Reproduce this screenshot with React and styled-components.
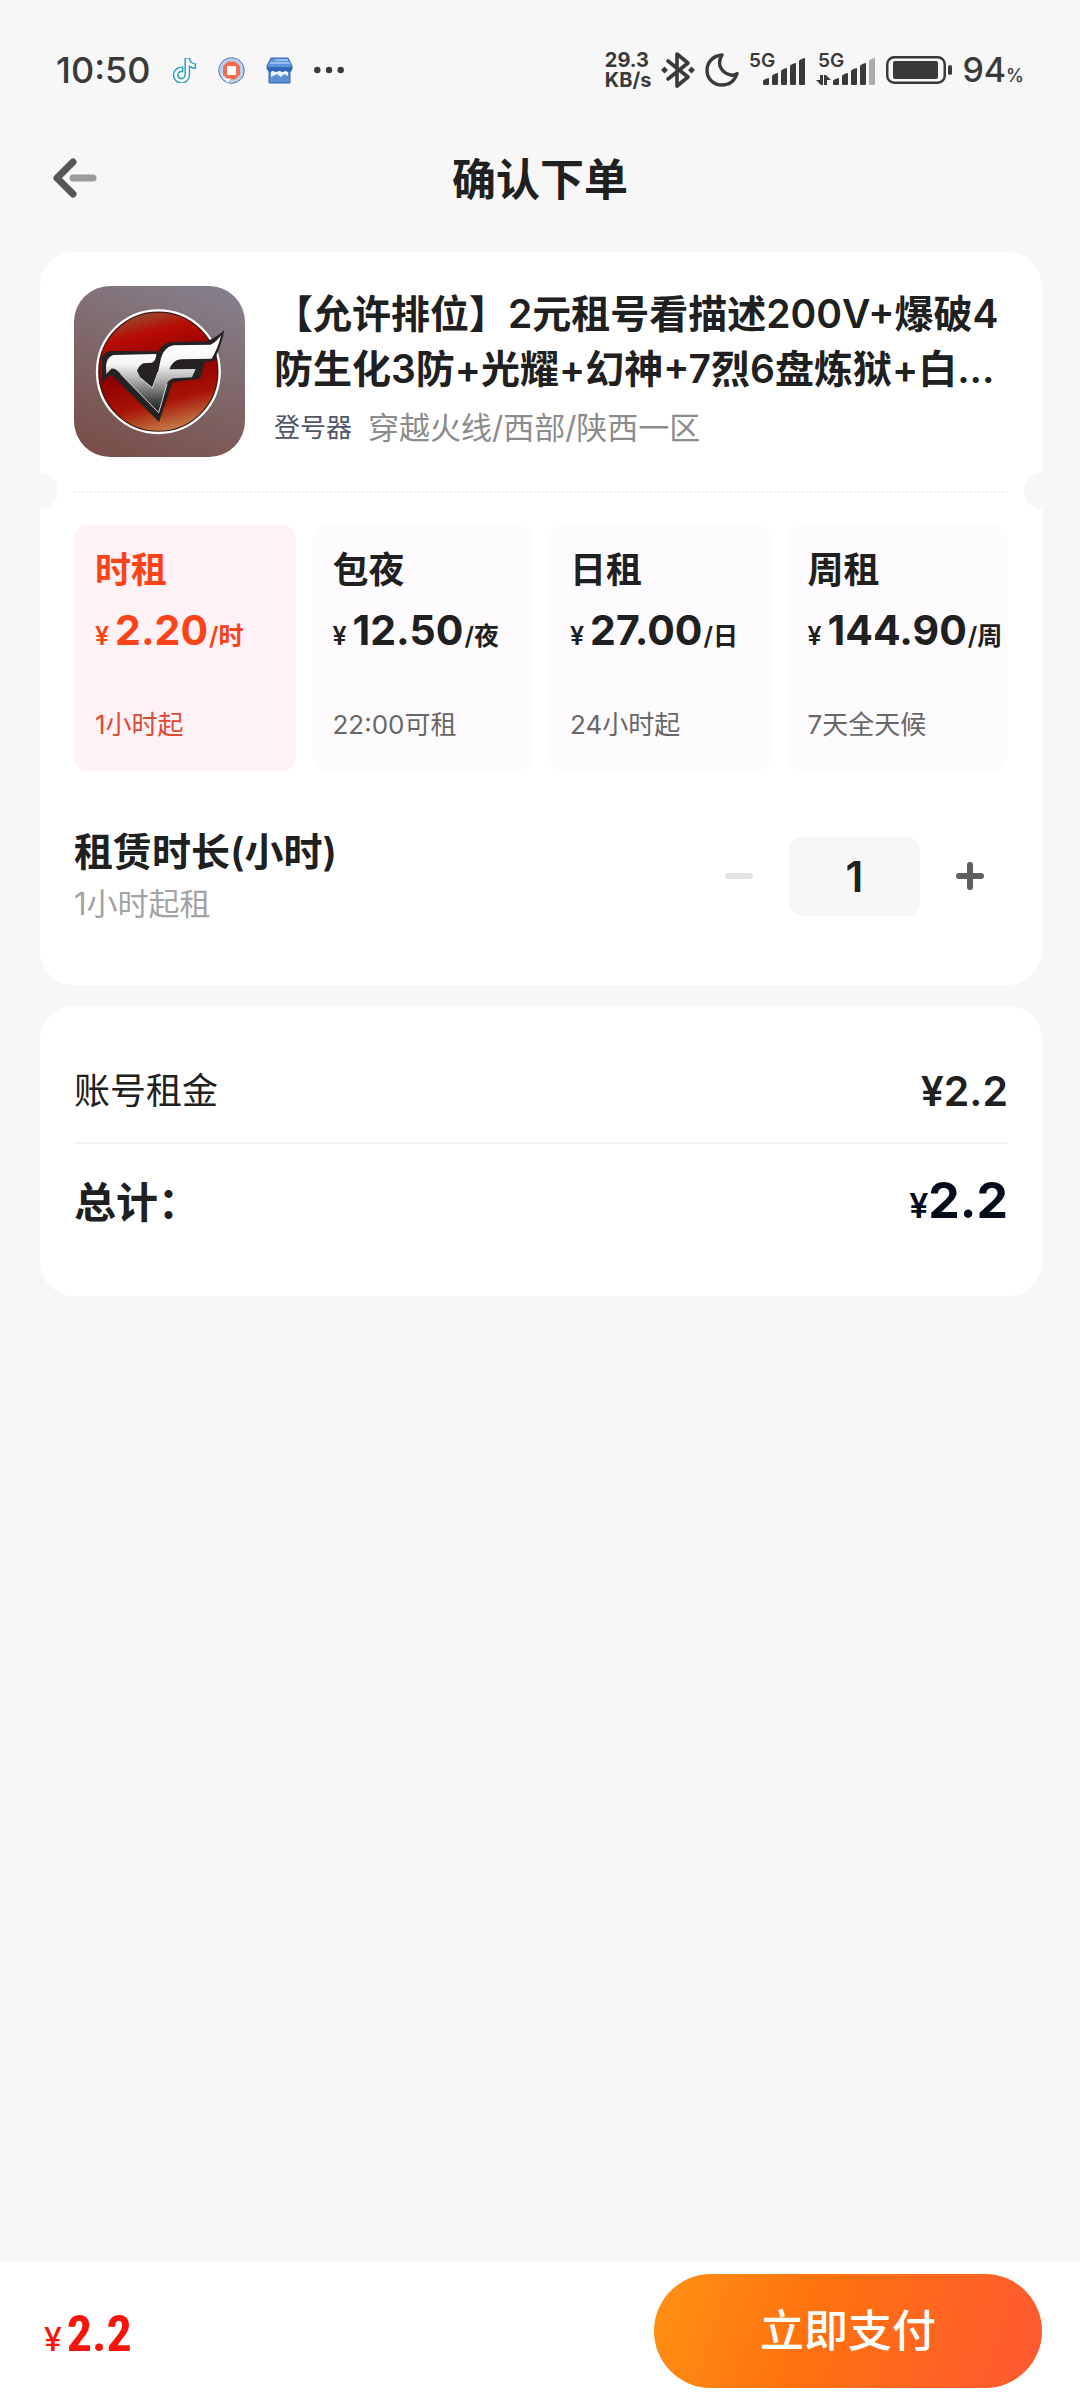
import React, { useState } from "react";
import styled, { createGlobalStyle } from "styled-components";
import { FaTiktok } from "react-icons/fa";

const GlobalStyle = createGlobalStyle`
  *, *::before, *::after { box-sizing: border-box; }
  body {
    margin: 0;
    background: #f7f7f7;
    color: #202020;
    font-family: Inter, "Noto Sans CJK SC", sans-serif;
  }
  button, input { font: inherit; color: inherit; border: 0; padding: 0; margin: 0; background: none; }
  button { cursor: pointer; }
  h1, h2, p { margin: 0; }
`;

const Page = styled.div`
  min-height: 100vh;
  display: flex;
  flex-direction: column;
`;

const StatusBar = styled.div`
  display: flex;
  justify-content: space-between;
  align-items: center;
  height: 140px;
  padding: 0 56px;
  color: #3a3a3a;
`;

const StatusGroup = styled.div`
  display: flex;
  align-items: center;
  gap: ${(p) => p.$gap}px;
`;

const Clock = styled.span`
  font-size: 36px;
  line-height: 40px;
  font-weight: 500;
`;

const NetSpeed = styled.span`
  font-size: 20px;
  line-height: 20px;
  font-weight: 700;
`;

const BatteryText = styled.span`
  font-size: 34px;
  line-height: 40px;
  font-weight: 500;
  small { font-size: 18px; line-height: 1; }
`;

const NavBar = styled.header`
  display: grid;
  grid-template-columns: 48px 1fr 48px;
  align-items: center;
  height: 80px;
  padding: 0 52px;
`;

const BackButton = styled.button`
  display: flex;
  height: 48px;
  align-items: center;
`;

const PageTitle = styled.h1`
  text-align: center;
  font-size: 44px;
  line-height: 60px;
  font-weight: 600;
`;

const Main = styled.main`
  flex: 1;
  display: flex;
  flex-direction: column;
  gap: 21px;
  padding: 32px 38px 32px 40px;
`;

const Card = styled.section`
  background: #fff;
  border-radius: 34px;
  padding: 34px;
`;

const Product = styled.div`
  display: flex;
  gap: 29px;
`;

const GameIcon = styled.svg`
  flex: none;
  width: 171px;
  height: 171px;
  border-radius: 36px;
`;

const ProductInfo = styled.div`
  flex: 1;
  min-width: 0;
`;

const ProductTitle = styled.h2`
  font-size: 39px;
  line-height: 55px;
  font-weight: 600;
`;

const Meta = styled.p`
  display: flex;
  align-items: center;
  gap: 16px;
  margin-top: 14px;
  line-height: 36px;
`;

const LoginTag = styled.span`
  font-size: 26px;
  color: #51566a;
`;

const Region = styled.span`
  font-size: 31px;
  color: #8c8c8c;
`;

const TicketLine = styled.div`
  position: relative;
  margin: 34px 0 32px;
  border-top: 2px dotted #f1f1f1;
  &::before, &::after {
    content: "";
    position: absolute;
    top: -20px;
    width: 36px;
    height: 36px;
    border-radius: 50%;
    background: #f7f7f7;
  }
  &::before { left: -52px; }
  &::after { right: -52px; }
`;

const Plans = styled.div`
  display: grid;
  grid-template-columns: repeat(4, 1fr);
  gap: 16px;
`;

const Plan = styled.button`
  display: flex;
  flex-direction: column;
  height: 246px;
  padding: 21px 0 21px 21px;
  border-radius: 14px;
  text-align: left;
  white-space: nowrap;
  background: ${(p) => (p.$active ? "#fef2f6" : "#fefbff")};
  color: ${(p) => (p.$active ? "#fa4318" : "#202020")};
`;

const PlanName = styled.span`
  font-size: 36px;
  line-height: 48px;
  font-weight: 600;
`;

const PlanPrice = styled.span`
  display: flex;
  align-items: baseline;
  margin-top: 9px;
  font-size: 25px;
  line-height: 54px;
  font-weight: 600;
  strong { font-size: 41px; font-weight: 700; margin: 0 1px 0 6px; }
`;

const PlanNote = styled.span`
  margin-top: auto;
  font-size: 26px;
  line-height: 50px;
  color: ${(p) => (p.$active ? "#dd4a35" : "#686868")};
`;

const Duration = styled.div`
  display: flex;
  justify-content: space-between;
  align-items: center;
  padding: 55px 0 25px;
`;

const DurationLabel = styled.label`
  display: block;
  font-size: 39px;
  line-height: 52px;
  font-weight: 600;
`;

const DurationHint = styled.p`
  margin-top: 4px;
  font-size: 31px;
  line-height: 44px;
  color: #a3a3a3;
`;

const Stepper = styled.div`
  display: flex;
  align-items: center;
  gap: 12px;
`;

const StepButton = styled.button`
  display: flex;
  align-items: center;
  justify-content: center;
  width: 76px;
  height: 79px;
  color: #5f5f5f;
  &:disabled { color: #e3e3e3; cursor: default; }
`;

const StepInput = styled.input`
  width: 131px;
  height: 79px;
  border-radius: 14px;
  background: #f6f6f6;
  text-align: center;
  font-size: 42px;
  font-weight: 600;
`;

const FeeRow = styled.div`
  display: flex;
  justify-content: space-between;
  align-items: center;
  height: ${(p) => (p.$total ? 118 : 104)}px;
  line-height: 60px;
  border-bottom: ${(p) => (p.$total ? "0" : "2px solid #f4f4f4")};
`;

const FeeName = styled.span`
  font-size: ${(p) => (p.$total ? 42 : 36)}px;
  font-weight: ${(p) => (p.$total ? 600 : 400)};
`;

const FeeValue = styled.span`
  font-size: 41px;
  font-weight: 600;
`;

const TotalValue = styled.span`
  color: #060c1c;
  font-size: 34px;
  font-weight: 600;
  strong { font-size: 50px; font-weight: 700; }
`;

const PayBar = styled.footer`
  display: flex;
  justify-content: space-between;
  align-items: center;
  padding: 13px 38px 12px 44px;
  background: #fff;
`;

const PayPrice = styled.span`
  display: flex;
  align-items: baseline;
  gap: 5px;
  padding-top: 12px;
  color: #f81408;
  font-size: 32px;
  font-weight: 500;
  line-height: 60px;
  strong {
    font-family: "Roboto Condensed", "Open Sans Condensed", "Liberation Sans", sans-serif;
    font-size: 50px;
    font-weight: 700;
  }
`;

const PayButton = styled.button`
  width: 388px;
  height: 114px;
  border-radius: 57px;
  background: linear-gradient(110deg, #ff9214 0%, #ff720f 40%, #ff5832 100%);
  color: #fff;
  font-size: 44px;
  line-height: 60px;
  font-weight: 500;
`;

function RecorderIcon() {
  return (
    <svg width="27" height="27" viewBox="0 0 27 27" aria-hidden="true">
      <circle cx="13.5" cy="13.5" r="12.8" fill="#b9d0f0" stroke="#5377b4" />
      <path d="M10 4.5h7l5 4.500v8.500l-5 5h-7l-5-5V9z" fill="#fa6a4c" />
      <path d="M4 19l5 3 4-1-3 5z" fill="#fff" />
      <rect x="9" y="9" width="9" height="9" rx="1" fill="#fff" />
    </svg>
  );
}

function ShopIcon() {
  return (
    <svg width="27" height="27" viewBox="0 0 27 27" aria-hidden="true">
      <path d="M5 1h17l4 8v3H1V9z" fill="#5b93dd" stroke="#2f63b0" />
      <path d="M4 6h20M9 3h13" stroke="#a9cdf5" strokeWidth="1.500" />
      <path d="M3 13h21v13H3z" fill="#5b8fd6" stroke="#2f63b0" />
      <path d="M5 14h17v5l-4-2-3 3-4-3-6 3z" fill="#e9f2fd" />
      <path d="M1 10h25v2q0 3-3 3t-3-2q-1 2-3.500 2T13.500 13q-1 2-3.500 2t-3-2q-1 2-3 2t-3-3z" fill="#2f69ba" />
    </svg>
  );
}

function DotsIcon() {
  return (
    <svg width="30" height="8" viewBox="0 0 30 8" fill="currentColor" aria-hidden="true">
      <circle cx="3.300" cy="4" r="3.200" />
      <circle cx="15" cy="4" r="3.200" />
      <circle cx="26.700" cy="4" r="3.200" />
    </svg>
  );
}

function BluetoothIcon() {
  return (
    <svg width="34" height="38" viewBox="0 0 34 38" fill="none" stroke="currentColor" strokeWidth="3.600" strokeLinejoin="round" strokeLinecap="round" aria-hidden="true">
      <path d="M7 10l20 16-11 9V3l11 9L7 28" />
      <path d="M0 19l3.500-3.500L7 19l-3.500 3.500zM27 19l3.500-3.500L34 19l-3.500 3.500z" fill="currentColor" stroke="none" />
    </svg>
  );
}

function MoonIcon() {
  return (
    <svg width="34" height="34" viewBox="0 0 34 34" fill="none" stroke="currentColor" strokeWidth="3.400" strokeLinejoin="round" aria-hidden="true">
      <path d="M17 2C7 3 2 10 2 17.500 2 26 9 32 17 32c7 0 12.500-4 15-11.500-2 1.500-4 2-6 1.500C17 20 11 12 17 2z" />
    </svg>
  );
}

function SignalIcon({ weak }) {
  const offset = weak ? 17 : 14;
  const width = weak ? 60 : 57;
  return (
    <svg width={width} height="46" viewBox={`0 -6 ${width} 46`} fill="currentColor" role="img" aria-label="5G">
      <text x={weak ? 2 : 0} y="14" fontSize="19" fontWeight="600">5G</text>
      {[6, 11, 16, 21, 26].map((h, i) => (
        <path
          key={h}
          opacity={weak && i === 4 ? 0.4 : 1}
          d={`M${offset + i * 9} ${31}v${3 - h}q1-2 6-3v${h}q0 1-1 1h-4q-1 0-1-1z`}
        />
      ))}
      {weak && <path d="M4 22h3v10H5l-5-5h4zM8 22h2l5 5h-4v5H8z" />}
    </svg>
  );
}

function BatteryIcon() {
  return (
    <svg width="66" height="28" viewBox="0 0 66 28" aria-hidden="true">
      <rect x="1.250" y="1.250" width="57.500" height="25.500" rx="7" fill="none" stroke="currentColor" strokeWidth="2.500" />
      <rect x="7" y="5" width="45" height="18" rx="2" fill="currentColor" />
      <rect x="62" y="9" width="4" height="10" rx="2" fill="currentColor" />
    </svg>
  );
}

function BackIcon() {
  return (
    <svg width="48" height="44" viewBox="0 0 48 44" fill="none" strokeLinecap="round" strokeLinejoin="round" aria-hidden="true">
      <path d="M21 20h20" stroke="#9b9b9b" strokeWidth="7" />
      <path d="M21 4L5 20l16 16" stroke="#565656" strokeWidth="7" />
    </svg>
  );
}

function CrossfireIcon() {
  return (
    <GameIcon viewBox="-48 -42 513 513" role="img" aria-label="穿越火线">
      <defs>
        <linearGradient id="tile" x1="0.700" y1="0" x2="0.300" y2="1">
          <stop offset="0" stopColor="#857e8a" />
          <stop offset="0.500" stopColor="#7f6668" />
          <stop offset="1" stopColor="#79504b" />
        </linearGradient>
        <linearGradient id="disc" x1="0.250" y1="0" x2="0.500" y2="1">
          <stop offset="0" stopColor="#8c5a38" />
          <stop offset="0.200" stopColor="#b80d04" />
          <stop offset="0.500" stopColor="#8e0000" />
          <stop offset="0.780" stopColor="#a81405" />
          <stop offset="1" stopColor="#c07846" />
        </linearGradient>
        <linearGradient id="steel" gradientUnits="userSpaceOnUse" x1="200" y1="130" x2="200" y2="340">
          <stop offset="0" stopColor="#ffffff" />
          <stop offset="0.300" stopColor="#f4f4f4" />
          <stop offset="0.550" stopColor="#a8a8a8" />
          <stop offset="0.800" stopColor="#4a4a4a" />
          <stop offset="1" stopColor="#1c1c1c" />
        </linearGradient>
      </defs>
      <rect x="-51" y="-42" width="520" height="513" fill="url(#tile)" />
      <circle cx="205" cy="215" r="180" fill="url(#disc)" stroke="#3c1a16" strokeWidth="6" />
      <circle cx="205" cy="215" r="184" fill="none" stroke="#fff" strokeWidth="7" />
      <path
        d="M36 172Q44 155 62 153L204 154Q220 130 242 126L350 124Q380 112 403 90Q396 132 372 182L345 187L330 236L248 246L207 366L68 228Q56 222 36 250Z"
        fill="#262223"
      />
      <path
        d="M48 197Q50 172 70 165L199 162Q197 184 186 188L160 190Q148 196 141 212L152 234L187 264L204 216L213 174Q222 142 250 136L362 134Q380 126 393 106Q384 145 365 176L272 178Q246 182 238 208L317 207L306 232L252 235Q236 238 231 252L206 338L92 222Q76 204 64 206L49 222Z"
        fill="url(#steel)"
      />
      <path d="M152 234L187 264L204 216M231 252L206 338L92 222" fill="none" stroke="#d8d8d8" strokeWidth="3" />
    </GameIcon>
  );
}

const plans = [
  { name: "时租", price: "2.20", unit: "时", note: "1小时起" },
  { name: "包夜", price: "12.50", unit: "夜", note: "22:00可租" },
  { name: "日租", price: "27.00", unit: "日", note: "24小时起" },
  { name: "周租", price: "144.90", unit: "周", note: "7天全天候" },
];

export default function App() {
  const [selected, setSelected] = useState(0);
  const [count, setCount] = useState(1);
  const amount = String(Number((Number(plans[selected].price) * count).toFixed(2)));

  return (
    <Page>
      <GlobalStyle />
      <StatusBar>
        <StatusGroup $gap={21}>
          <Clock>10:50</Clock>
          <FaTiktok size={25} color="#fff" stroke="#2c9fc0" strokeWidth={30} />
          <RecorderIcon />
          <ShopIcon />
          <DotsIcon />
        </StatusGroup>
        <StatusGroup $gap={10}>
          <NetSpeed>29.3<br />KB/s</NetSpeed>
          <BluetoothIcon />
          <MoonIcon />
          <SignalIcon />
          <SignalIcon weak />
          <BatteryIcon />
          <BatteryText>94<small>%</small></BatteryText>
        </StatusGroup>
      </StatusBar>
      <NavBar>
        <BackButton type="button" aria-label="返回"><BackIcon /></BackButton>
        <PageTitle>确认下单</PageTitle>
      </NavBar>
      <Main>
        <Card>
          <Product>
            <CrossfireIcon />
            <ProductInfo>
              <ProductTitle>【允许排位】2元租号看描述200V+爆破4防生化3防+光耀+幻神+7烈6盘炼狱+白...</ProductTitle>
              <Meta>
                <LoginTag>登号器</LoginTag>
                <Region>穿越火线/西部/陕西一区</Region>
              </Meta>
            </ProductInfo>
          </Product>
          <TicketLine />
          <Plans>
            {plans.map((plan, i) => (
              <Plan key={plan.name} type="button" $active={i === selected} aria-pressed={i === selected} onClick={() => setSelected(i)}>
                <PlanName>{plan.name}</PlanName>
                <PlanPrice>
                  <span>¥</span>
                  <strong>{plan.price}</strong>
                  <span>/{plan.unit}</span>
                </PlanPrice>
                <PlanNote $active={i === selected}>{plan.note}</PlanNote>
              </Plan>
            ))}
          </Plans>
          <Duration>
            <div>
              <DurationLabel htmlFor="hours">租赁时长(小时)</DurationLabel>
              <DurationHint>1小时起租</DurationHint>
            </div>
            <Stepper>
              <StepButton type="button" aria-label="减少" disabled={count <= 1} onClick={() => setCount(count - 1)}>
                <svg width="30" height="30" viewBox="0 0 30 30" stroke="currentColor" strokeWidth="6" strokeLinecap="round"><path d="M4 15h22" /></svg>
              </StepButton>
              <StepInput id="hours" inputMode="numeric" value={count} onChange={(e) => setCount(Math.max(1, Number(e.target.value) || 1))} />
              <StepButton type="button" aria-label="增加" onClick={() => setCount(count + 1)}>
                <svg width="30" height="30" viewBox="0 0 30 30" stroke="currentColor" strokeWidth="6" strokeLinecap="round"><path d="M4 15h22M15 4v22" /></svg>
              </StepButton>
            </Stepper>
          </Duration>
        </Card>
        <Card>
          <FeeRow>
            <FeeName>账号租金</FeeName>
            <FeeValue>¥{amount}</FeeValue>
          </FeeRow>
          <FeeRow $total>
            <FeeName $total>总计：</FeeName>
            <TotalValue>¥<strong>{amount}</strong></TotalValue>
          </FeeRow>
        </Card>
      </Main>
      <PayBar>
        <PayPrice>¥<strong>{amount}</strong></PayPrice>
        <PayButton type="button">立即支付</PayButton>
      </PayBar>
    </Page>
  );
}
